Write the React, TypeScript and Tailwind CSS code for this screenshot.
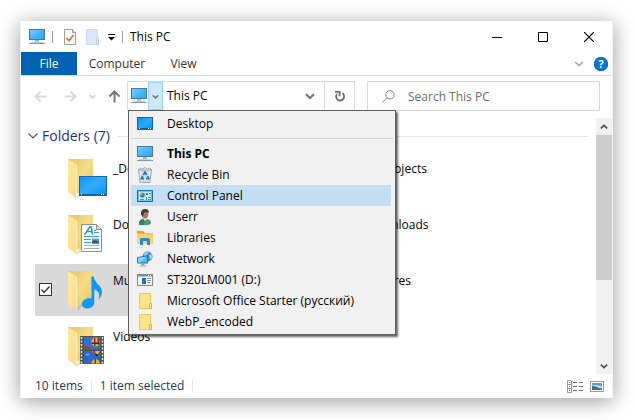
import { useState, type ReactNode } from "react";

type IconProps = { className?: string };

function PcIcon({ className = "size-4" }: IconProps) {
  return (
    <svg viewBox="0 0 16 16" className={className} aria-hidden="true">
      <defs>
        <linearGradient id="pcScreen" x1="0" y1="0" x2="1" y2="1">
          <stop offset="0" stopColor="#7fcdfb" />
          <stop offset="0.5" stopColor="#4bb6f8" />
          <stop offset="1" stopColor="#2aa3f2" />
        </linearGradient>
      </defs>
      <rect x="0.5" y="0.5" width="15" height="10" fill="url(#pcScreen)" stroke="#47799f" />
      <rect x="6" y="11" width="4" height="2" fill="#a9bccb" />
      <rect x="0" y="14" width="16" height="1" fill="#8397a8" />
      <rect x="2" y="13" width="12" height="1" fill="#bfd0dc" />
    </svg>
  );
}

function DesktopIcon({ className = "size-4" }: IconProps) {
  return (
    <svg viewBox="0 0 16 16" className={className} aria-hidden="true">
      <defs>
        <linearGradient id="deskScreen" x1="0" y1="0" x2="1" y2="1">
          <stop offset="0" stopColor="#0a94f5" />
          <stop offset="0.5" stopColor="#2aa8ff" />
          <stop offset="1" stopColor="#0c95f6" />
        </linearGradient>
      </defs>
      <rect x="0.5" y="1.5" width="15" height="12" fill="url(#deskScreen)" stroke="#0b6bab" />
      <rect x="1" y="12" width="14" height="1" fill="#0a5f9c" />
      <path d="M2 12h1v1H2zM11 12h1v1h-1zM13 12h1v1h-1z" fill="#fff" />
    </svg>
  );
}

function RecycleIcon({ className = "size-4" }: IconProps) {
  return (
    <svg viewBox="0 0 16 16" className={className} aria-hidden="true">
      <path d="M1.500 2.500h13L13 15.500H3z" fill="#d9dde0" stroke="#a3a9ae" />
      <path d="M1.500 3l2-2 2 1 2.500-1.500 2.500 1.500 2-1 2 2z" fill="#f7f8f9" stroke="#8e959b" strokeWidth="0.8" />
      <path d="M3.500 4l.8 10.500M12.500 4l-.8 10.500" stroke="#f6f8fa" />
      <path d="M6.300 8l1.700-2.800L9.700 8M10.600 9l1.200 2.600H9M7 11.600H4.300L5.600 9" fill="none" stroke="#1878c8" strokeWidth="1.700" />
    </svg>
  );
}

function ControlPanelIcon({ className = "size-4" }: IconProps) {
  return (
    <svg viewBox="0 0 16 16" className={className} aria-hidden="true">
      <rect x="0.5" y="2.5" width="15" height="11" fill="#d8f2fe" stroke="#1273ac" />
      <rect x="1.500" y="3.500" width="13" height="9" fill="none" stroke="#6cc6f3" />
      <circle cx="5.300" cy="7" r="2.600" fill="#1e88d8" />
      <path d="M5.300 7V4.400A2.600 2.600 0 0 0 2.800 7.600z" fill="#f7a91c" />
      <path d="M9 5h2v2H9zM12 5h2v1h-2zM9 9h1v3H9z" fill="#1b7fc4" />
      <path d="M11 9h3v1h-3zM11 11h3v1h-3zM3 11h4v1H3z" fill="#2f94d8" />
      <path d="M12 7h2v1h-2z" fill="#f7a91c" />
    </svg>
  );
}

function UserIcon({ className = "size-4" }: IconProps) {
  return (
    <svg viewBox="0 0 16 16" className={className} aria-hidden="true">
      <path d="M2 16c-.2-4 1.400-5.600 4.300-6.200l4 .2c2.700.6 3.900 2.400 3.700 4.700L11 16z" fill="#4a9c78" />
      <path d="M2 16c-.2-4 1.400-5.600 4.300-6.200L8 12l-1 4z" fill="#38805f" />
      <path d="M6.300 9.500L8 12l2-2.300V8H6.500z" fill="#f0ede8" />
      <ellipse cx="8.200" cy="5.400" rx="3" ry="4" fill="#a87758" />
      <path d="M4 5.500C3.500 2 5.500 0 8 0c2.600 0 4.200 1.500 3.800 4.200L10 3 7 3.600 6.200 6.500 5.600 8z" fill="#46382f" />
    </svg>
  );
}

function LibrariesIcon({ className = "size-4" }: IconProps) {
  return (
    <svg viewBox="0 0 16 16" className={className} aria-hidden="true">
      <path d="M0 1h6l2 2H0z" fill="#e6a117" />
      <path d="M0 3h16v11H0z" fill="#ffd466" />
      <path d="M0 3h16v1H0z" fill="#f6bd3b" />
      <path d="M3 9.500Q3 8 4.500 8h7Q13 8 13 9.500V15h-3v-4H6v4H3z" fill="#2c8ade" />
    </svg>
  );
}

function NetworkIcon({ className = "size-4" }: IconProps) {
  return (
    <svg viewBox="0 0 16 16" className={className} aria-hidden="true">
      <circle cx="10.500" cy="5.500" r="5" fill="#3f8fc4" />
      <path d="M7 2.500c2-1.500 3-1.500 4.500-1.500L10 3.500 7.500 5zM12 4l3-.5.3 3.500-2.300 1.500z" fill="#9fd6ec" />
      <path d="M0.500 6.500L10.500 5v7L.500 12z" fill="#55bbfa" stroke="#2c6f9d" />
      <path d="M1 7l9-1.400L2 11.500H1z" fill="#8fd4fc" />
      <path d="M4.500 12.500h2.500l.5 2H4z" fill="#7e98aa" />
      <path d="M2.500 14.500h7v1h-7z" fill="#9fb2c0" />
    </svg>
  );
}

function DriveIcon({ className = "size-4" }: IconProps) {
  return (
    <svg viewBox="0 0 16 16" className={className} aria-hidden="true">
      <rect x="0.5" y="2.5" width="15" height="11" fill="#fafafa" stroke="#85888c" />
      <path d="M0 2h16v2.500H0z" fill="#85888c" />
      <path d="M11 3h1v1h-1zM13 3h1v1h-1z" fill="#fff" />
      <rect x="5" y="6" width="4" height="6" fill="#0a78d6" />
      <path d="M10 6.500h4M10 8.500h4M10 10.500h3" stroke="#8b8f94" />
    </svg>
  );
}

function FolderIcon({ className = "size-4" }: IconProps) {
  return (
    <svg viewBox="0 0 16 16" className={className} aria-hidden="true">
      <path d="M2.500.5h11v9.500l1 1v4.500H2.500z" fill="#ffe38c" stroke="#f0cb55" />
      <path d="M12.500 10.500h2v5h-2z" fill="#ffe794" stroke="#e3b93c" />
    </svg>
  );
}

function BigFolder({ children }: { children?: ReactNode }) {
  return (
    <svg viewBox="0 0 40 42" className="h-[42px] w-10 shrink-0" aria-hidden="true">
      <defs>
        <linearGradient id="folderBack" x1="0" y1="0" x2="1" y2="1">
          <stop offset="0" stopColor="#e9c766" />
          <stop offset="0.5" stopColor="#f6dc87" />
          <stop offset="1" stopColor="#e8c463" />
        </linearGradient>
        <linearGradient id="folderFlap" x1="0" y1="0" x2="1" y2="1">
          <stop offset="0" stopColor="#ffe9a6" />
          <stop offset="1" stopColor="#fbdc86" />
        </linearGradient>
        <linearGradient id="bigScreen" x1="0" y1="0" x2="1" y2="1">
          <stop offset="0" stopColor="#0a94f5" />
          <stop offset="0.45" stopColor="#33acff" />
          <stop offset="1" stopColor="#0c95f6" />
        </linearGradient>
      </defs>
      <path d="M8 40l4-5h4l-4 5z" fill="#000" opacity="0.1" />
      <path d="M1 1h25v34H9z" fill="url(#folderBack)" />
      <path d="M1 1l8.500 5.500v34L1 33.500z" fill="url(#folderFlap)" />
      <path d="M9.500 6.500v34" stroke="#fff3cc" strokeWidth="0.700" />
      {children}
    </svg>
  );
}

function DesktopOverlay() {
  return (
    <g>
      <rect x="12.500" y="18.500" width="27" height="19" fill="url(#bigScreen)" stroke="#0b6bab" />
      <path d="M13 36h26v1H13z" fill="#0a5f9c" />
      <path d="M14 36h1v1h-1zM34 36h1v1h-1zM36 36h1v1h-1z" fill="#fff" />
    </g>
  );
}

function DocumentOverlay() {
  return (
    <g>
      <path d="M14.500 10.500h15l5 5v22h-20z" fill="#fbfcfd" stroke="#8a8f94" />
      <path d="M29.500 10.500v5h5z" fill="#dfe3e6" stroke="#8a8f94" />
      <path d="M17 20l1.500-.3L22.800 13h1.600l.8 6.800 1.200.2" fill="none" stroke="#1c8fd0" strokeWidth="1.500" />
      <path d="M20.300 17.500h4.500" stroke="#1c8fd0" />
      <path d="M27 16.500h2M27 18.500h5M17 22.500h15M17 25.500h7M17 28.500h7" stroke="#35a0e0" />
      <path d="M17 31.500h15M17 34.500h15" stroke="#a6acb1" />
      <rect x="25" y="24.500" width="7" height="5" fill="#5e9fd8" />
      <path d="M25 29.500v-2l3-1.500 4 2v1.500z" fill="#2e5b77" />
    </g>
  );
}

function MusicOverlay() {
  return (
    <path
      d="M24.500 6.500h2.200c.6 4.200 3 6.300 5.600 9.200 3.600 4 3.800 9-.8 14 1.600-4.700 1-8-4.200-10.400v13.200c0 3.500-3.300 5.900-7 5.900-3.200 0-5.400-1.600-5.400-4.200 0-3.400 3.600-6 7.300-6 .9 0 1.700.1 2.300.4z"
      fill="#0d98f5"
    />
  );
}

function FilmOverlay() {
  return (
    <g>
      <rect x="13" y="10" width="24" height="28" fill="#50504c" />
      <path d="M14.500 11v27M35.500 11v27" stroke="#e2e2de" strokeWidth="1.600" strokeDasharray="2 1.500" />
      <rect x="17" y="11" width="16" height="12.500" fill="#3670cf" />
      <rect x="17" y="25" width="16" height="12.500" fill="#2d66c8" />
      <path d="M17 19l5 1.500 5 3H17z" fill="#b9365e" />
      <path d="M17 22l4-1 3 2.500h-7z" fill="#1f7a3c" />
      <ellipse cx="28.500" cy="16" rx="4" ry="4.500" fill="#e8b52c" />
      <path d="M27 12h1.500v8H27zM30.500 12.500H32v6h-1.500z" fill="#8e2a2a" />
      <path d="M24.700 16.500h7.600v1.500h-7.600z" fill="#2b2b52" />
      <path d="M25 25h8l-2 3h-3.500z" fill="#e8b52c" />
      <path d="M26 25h2l1 4h-1z" fill="#8e2a2a" />
      <path d="M28.500 28h2v2h-2z" fill="#2a2016" />
      <ellipse cx="20.500" cy="28.500" rx="2.500" ry="1" fill="#6f9fe6" />
      <path d="M24.500 37.500c0-3 2-4.500 4-4.500s4 1.500 4 4.500z" fill="#e8b52c" />
      <path d="M27.500 33h1.500v4.500h-1.500z" fill="#8e2a2a" />
    </g>
  );
}

function Chevron({ className }: IconProps) {
  return (
    <svg viewBox="0 0 12 12" className={className} fill="none" stroke="currentColor" aria-hidden="true">
      <path d="M1.500 3.500L6 8l4.500-4.500" />
    </svg>
  );
}

function BoldChevron({ className }: IconProps) {
  return (
    <svg viewBox="0 0 10 10" className={className} fill="none" stroke="currentColor" strokeWidth="2.200" aria-hidden="true">
      <path d="M1 3.300l4 3.700 4-3.700" />
    </svg>
  );
}

function NavArrow({ className }: IconProps) {
  return (
    <svg viewBox="0 0 13 13" className={className} fill="none" stroke="currentColor" strokeWidth="2" aria-hidden="true">
      <path d="M12.500 6.500h-11M6.500 1.500l-5 5 5 5" />
    </svg>
  );
}

const places = [
  { label: "Recycle Bin", Icon: RecycleIcon },
  { label: "Control Panel", Icon: ControlPanelIcon },
  { label: "Userr", Icon: UserIcon },
  { label: "Libraries", Icon: LibrariesIcon },
  { label: "Network", Icon: NetworkIcon },
  { label: "ST320LM001 (D:)", Icon: DriveIcon },
  { label: "Microsoft Office Starter (русский)", Icon: FolderIcon },
  { label: "WebP_encoded", Icon: FolderIcon },
];

const folders: { label: string; overlay?: ReactNode; selected?: boolean }[] = [
  { label: "_Desktop", overlay: <DesktopOverlay /> },
  { label: "3D Objects" },
  { label: "Documents", overlay: <DocumentOverlay /> },
  { label: "Downloads" },
  { label: "Music", overlay: <MusicOverlay />, selected: true },
  { label: "Pictures" },
  { label: "Videos", overlay: <FilmOverlay /> },
];

function PlaceItem({
  label,
  Icon,
  bold,
  active,
}: {
  label: string;
  Icon: (p: IconProps) => ReactNode;
  bold?: boolean;
  active?: boolean;
}) {
  return (
    <button
      type="button"
      role="menuitem"
      className={`mr-0.5 flex h-[21px] items-center gap-3.5 pl-1.5 text-left whitespace-nowrap ${
        active ? "bg-[#c3def5]" : ""
      } ${bold ? "font-bold" : ""}`}
    >
      <Icon className="size-4 shrink-0" />
      {label}
    </button>
  );
}

function PlacesMenu() {
  return (
    <div
      role="menu"
      aria-label="Places"
      className="absolute top-7 left-0 z-10 flex w-[268px] flex-col border border-[#5f5f5f] bg-[#f1f1f1] p-0.5 text-black shadow-[2px_2px_2px_rgba(0,0,0,0.6)]"
    >
      <PlaceItem label="Desktop" Icon={DesktopIcon} />
      <div role="separator" className="my-1 h-px bg-[#d5d5d5]" />
      <PlaceItem label="This PC" Icon={PcIcon} bold />
      {places.map((p) => (
        <PlaceItem key={p.label} label={p.label} Icon={p.Icon} active={p.label === "Control Panel"} />
      ))}
    </div>
  );
}

function TitleBar() {
  return (
    <header className="flex h-[31px] items-center">
      <div className="flex flex-1 items-center pl-2">
        <PcIcon className="size-4" />
        <span className="ml-[7px] h-3 w-px bg-[#9a9a9a]" />
        <button type="button" aria-label="Properties" className="ml-[11px]">
          <svg viewBox="0 0 12 16" className="h-4 w-3" aria-hidden="true">
            <path d="M.5.5h8l3 3v12H.5z" fill="#fcfcfc" stroke="#9a9a9a" />
            <path d="M8.500.5v3h3" fill="#ddd" stroke="#9a9a9a" />
            <path d="M2.500 9l2.500 2.500L9.500 6" fill="none" stroke="#e8622a" strokeWidth="1.600" />
          </svg>
        </button>
        <button type="button" aria-label="New folder" className="ml-2.5">
          <svg viewBox="0 0 13 16" className="h-4 w-[13px]" aria-hidden="true">
            <path d="M.5.5h11V10l1 1v4.500H.5z" fill="#dde6f4" stroke="#cfdbef" />
            <path d="M10.500 9.500h2v6h-2z" fill="#e6edf8" stroke="#bfcfe8" />
          </svg>
        </button>
        <button type="button" aria-label="Customize Quick Access Toolbar" className="ml-[9px]">
          <svg viewBox="0 0 7 8" className="h-2 w-[7px]" aria-hidden="true">
            <path d="M0 1h7v1H0zM0 4h7L3.500 7.500z" fill="#111" />
          </svg>
        </button>
        <span className="ml-[7px] h-3 w-px bg-[#9a9a9a]" />
        <h1 className="ml-[7px]">This PC</h1>
      </div>
      <div className="flex h-full">
        <button type="button" aria-label="Minimize" className="grid w-[46px] place-items-center">
          <svg viewBox="0 0 10 10" className="size-2.5" aria-hidden="true">
            <path d="M0 5h10v1H0z" />
          </svg>
        </button>
        <button type="button" aria-label="Maximize" className="grid w-[46px] place-items-center">
          <svg viewBox="0 0 10 10" className="size-2.5" fill="none" stroke="#000" aria-hidden="true">
            <path d="M.5.5h9v9h-9z" />
          </svg>
        </button>
        <button type="button" aria-label="Close" className="grid w-[46px] place-items-center">
          <svg viewBox="0 0 10 10" className="size-2.5" stroke="#000" strokeWidth="1.200" aria-hidden="true">
            <path d="M0 0l10 10M10 0L0 10" />
          </svg>
        </button>
      </div>
    </header>
  );
}

function Ribbon() {
  return (
    <nav className="flex h-6 items-stretch border-b border-[#dadbdc] text-[#333]">
      <button type="button" className="w-14 bg-[#0063b1] text-white">
        File
      </button>
      <button type="button" className="w-20">
        Computer
      </button>
      <button type="button" className="w-[53px]">
        View
      </button>
      <div className="ml-auto flex items-center gap-2.5 pr-1">
        <button type="button" aria-label="Expand the Ribbon">
          <Chevron className="size-2.5 stroke-[1.6] text-[#999]" />
        </button>
        <button
          type="button"
          aria-label="Help"
          className="grid size-3.5 place-items-center rounded-full bg-[#0a78d6] text-[11px] leading-none font-bold text-white ring-1 ring-[#0a63b0] ring-inset"
        >
          ?
        </button>
      </div>
    </nav>
  );
}

function AddressRow() {
  return (
    <div className="flex items-stretch pt-[5px] pr-3 pb-[7px] pl-[13px]">
      <div className="flex w-[93px] items-center">
        <button type="button" aria-label="Back" className="text-[#dcdcdc]">
          <NavArrow className="size-[13px]" />
        </button>
        <button type="button" aria-label="Forward" className="ml-[17px] text-[#dcdcdc]">
          <NavArrow className="size-[13px] rotate-180" />
        </button>
        <button type="button" aria-label="Recent locations" className="ml-3 text-[#d2d2d2]">
          <BoldChevron className="size-[7px]" />
        </button>
        <button type="button" aria-label="Up" className="ml-3 text-[#777]">
          <NavArrow className="size-[13px] rotate-90" />
        </button>
      </div>
      <div className="relative flex h-[30px] flex-1 items-stretch border border-[#d9d9d9]">
        <span className="flex items-center pr-px pl-[3px]">
          <PcIcon className="size-4" />
        </span>
        <button
          type="button"
          aria-label="Choose a place"
          aria-expanded="true"
          className="grid w-[15px] place-items-center border border-[#99d1ff] bg-[#cce8ff] text-[#777]"
        >
          <BoldChevron className="size-[7px]" />
        </button>
        <span className="ml-1 flex flex-1 items-center text-black">This PC</span>
        <button type="button" aria-label="Previous locations" className="px-[9px] text-[#777]">
          <BoldChevron className="size-2.5" />
        </button>
        <button type="button" aria-label="Refresh" className="grid w-[30px] place-items-center border-l border-[#d9d9d9] text-[#6a6a6a]">
          <svg viewBox="0 0 12 12" className="size-3" fill="none" stroke="currentColor" strokeWidth="1.800" aria-hidden="true">
            <path d="M8.300 3.200A4 4 0 1 1 3 4" />
            <path d="M1 1.900h4.600v4.300" />
          </svg>
        </button>
        <PlacesMenu />
      </div>
      <div className="ml-3 flex w-[233px] items-center border border-[#d9d9d9] pl-3.5">
        <label htmlFor="search" aria-label="Search This PC">
          <svg viewBox="0 0 13 13" className="size-[13px]" fill="none" stroke="#848484" aria-hidden="true">
            <circle cx="8" cy="4.800" r="4.200" />
            <path d="M5 7.800L.5 12.300" />
          </svg>
        </label>
        <input
          id="search"
          type="text"
          placeholder="Search This PC"
          className="ml-[13px] h-full min-w-0 flex-1 bg-transparent outline-none placeholder:text-[#6d6d6d]"
        />
      </div>
    </div>
  );
}

function FolderTile({ label, overlay, selected }: { label: string; overlay?: ReactNode; selected?: boolean }) {
  const [checked, setChecked] = useState(Boolean(selected));
  return (
    <li>
      <label className={`group flex h-[52px] items-start pt-1.5 pl-1 ${checked ? "bg-[#d9d9d9]" : ""}`}>
        <span className={`mt-[13px] mr-[15px] grid size-[13px] ${checked ? "" : "opacity-0 group-hover:opacity-100"}`}>
          <input
            type="checkbox"
            checked={checked}
            onChange={(e) => setChecked(e.target.checked)}
            className="col-start-1 row-start-1 size-[13px] appearance-none border border-[#333] bg-white"
          />
          <svg viewBox="0 0 13 13" className="pointer-events-none col-start-1 row-start-1 size-[13px]" fill="none" stroke="#333" strokeWidth="1.300" aria-hidden="true">
            <path d="M2.500 6.500L5 9.500l5.500-6" />
          </svg>
        </span>
        <BigFolder>{overlay}</BigFolder>
        <span className="ml-1.5 pt-[3px] text-black">{label}</span>
      </label>
    </li>
  );
}

function FolderPane() {
  return (
    <main className="flex">
      <div className="flex-1 pr-2">
        <h2 className="flex h-[34px] items-center pt-0.5 pl-1.5 text-[14px] text-[#1e3287]">
          <Chevron className="size-3 stroke-[1.2] text-[#555]" />
          <span className="ml-[3px]">Folders (7)</span>
          <span className="ml-2 h-px flex-1 bg-[#e2e2e2]" />
        </h2>
        <ul className="grid grid-cols-[248px_1fr] gap-x-[5px] gap-y-1 pb-0.5 pl-3.5">
          {folders.map((f) => (
            <FolderTile key={f.label} {...f} />
          ))}
        </ul>
      </div>
      <div className="flex w-4 flex-col bg-[#f0f0f0] text-[#505050]">
        <button type="button" aria-label="Scroll up" className="grid h-[17px] place-items-center">
          <BoldChevron className="size-2 rotate-180" />
        </button>
        <div className="h-[145px] bg-[#cdcdcd]" />
        <button type="button" aria-label="Scroll down" className="mt-auto grid h-[17px] place-items-center">
          <BoldChevron className="size-2" />
        </button>
      </div>
    </main>
  );
}

function StatusBar() {
  return (
    <footer className="flex h-6 items-center pr-2 pl-3.5 text-[#1e395b]">
      <span>10 items</span>
      <span className="mx-2 h-3 w-px bg-[#e8e8e8]" />
      <span>1 item selected</span>
      <span className="mx-2 h-3 w-px bg-[#e8e8e8]" />
      <div className="ml-auto flex items-center gap-[7px]">
        <button type="button" aria-label="Details view">
          <svg viewBox="0 0 16 13" className="h-[13px] w-4" aria-hidden="true">
            <path d="M.5.5h4v12h-4zM.5 4.500h4M.5 8.500h4" fill="#fff" stroke="#9a9a9a" />
            <path d="M2 2h1v1H2z" fill="#555" />
            <path d="M2 6h1v1H2z" fill="#4d7fe0" />
            <path d="M2 10h1v1H2z" fill="#e01818" />
            <path d="M6 2.500h4M12 2.500h4M6 6.500h4M12 6.500h4M6 10.500h4M12 10.500h4" stroke="#707070" />
          </svg>
        </button>
        <button type="button" aria-label="Large thumbnails">
          <svg viewBox="0 0 14 11" className="h-[11px] w-3.5" aria-hidden="true">
            <rect x="0.5" y="0.5" width="13" height="10" fill="#fff" stroke="#9a9a9a" />
            <path d="M2 2h10v7H2z" fill="#5c9be0" />
            <path d="M2 4.500l4-.5 6 1.500V7H2z" fill="#c9e3f5" />
            <path d="M2 5l4 .5 3 1.500 3 .5V9H2z" fill="#3f7468" />
          </svg>
        </button>
      </div>
    </footer>
  );
}

export default function App() {
  return (
    <div className="min-h-screen bg-white pt-[21px] pr-[21px] pb-[22px] pl-5 font-['Open_Sans','Noto_Sans',sans-serif] text-[12px] leading-4 text-black">
      <div className="border-x border-[#f4f4f4] bg-white shadow-[0_3px_20px_rgba(0,0,0,0.4)]">
        <TitleBar />
        <Ribbon />
        <AddressRow />
        <FolderPane />
        <StatusBar />
      </div>
    </div>
  );
}
